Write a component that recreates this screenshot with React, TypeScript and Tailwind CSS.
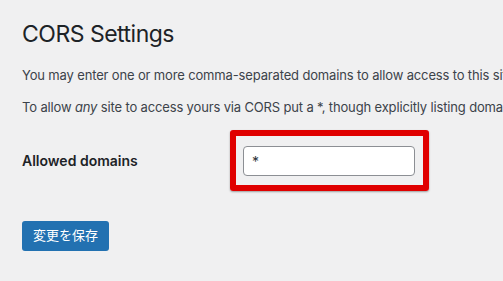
import React from 'react';

const App: React.FC = () => {
  return (
    <div
      className="w-[503px] h-[281px] overflow-hidden bg-[#f0f0f1] text-[#3c434a]"
      style={{ fontFamily: 'Inter, "Noto Sans CJK JP", sans-serif' }}
    >
      <div className="pl-[22px] pt-[20px] whitespace-nowrap">
        <h1 className="text-[23px] leading-[29px] text-[#1d2327] font-normal tracking-[-0.5px]">CORS Settings</h1>

        <p className="mt-[16px] text-[13px] leading-[20px] tracking-[-0.15px]">
          You may enter one or more comma-separated domains to allow access to this site using the CORS standard.
        </p>
        <p className="mt-[12px] text-[13px] leading-[20px] tracking-[-0.15px]">
          To allow <em>any</em> site to access yours via CORS put a *, though explicitly listing domains is recommended.
        </p>

        {/* Settings row */}
        <div className="mt-[13px] flex items-center">
          <label className="w-[208px] text-[14px] font-semibold text-[#1d2327]">Allowed domains</label>
          <div className="border-[6px] border-[#e00000] rounded-[3px] pl-[7px] pr-[8px] pt-[10px] pb-[9px] shadow-[0_1px_2px_rgba(0,0,0,0.35)]">
            <input
              type="text"
              defaultValue="*"
              className="block w-[172px] h-[30px] bg-white border border-[#8c8f94] rounded-[4px] px-[8px] text-[14px] text-[#2c3338] outline-none"
            />
          </div>
        </div>

        <button className="mt-[30px] w-[87px] h-[30px] bg-[#2271b1] rounded-[3px] text-white text-[13px]">
          変更を保存
        </button>
      </div>
    </div>
  );
};

export default App;
